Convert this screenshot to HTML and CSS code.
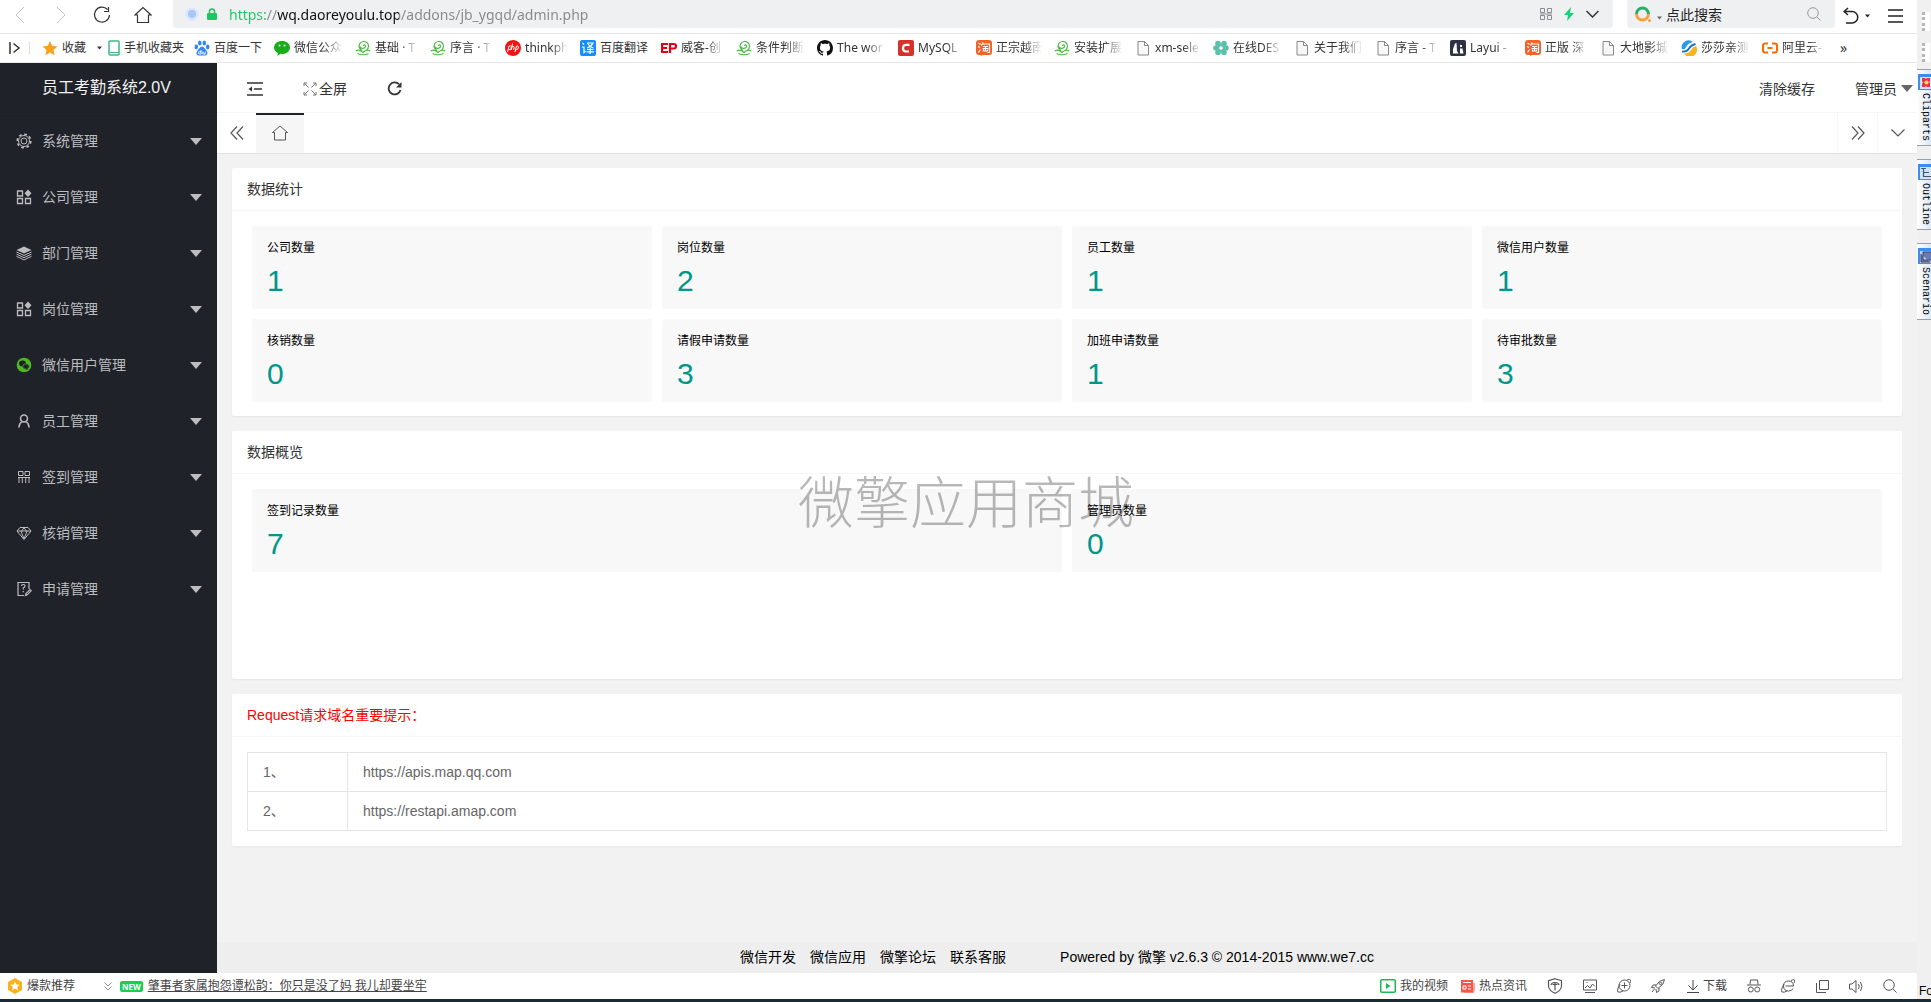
FILE: index.html
```html
<!DOCTYPE html>
<html lang="zh-CN">
<head>
<meta charset="utf-8">
<title>员工考勤系统2.0V</title>
<link rel="stylesheet" href="styles.css">
</head>
<body>
<svg class="sprite" aria-hidden="true">
  <symbol id="caret" viewBox="0 0 12 7"><path d="M0 0h12L6 7z" fill="currentColor"/></symbol>
  <symbol id="page" viewBox="0 0 16 16"><path d="M3 1.500h6.500l4 4v9.500h-10.500zM9.500 1.500v4h4" fill="#f7f7f7" stroke="#888"/></symbol>
  <symbol id="tp" viewBox="0 0 16 16"><g fill="none" stroke="#4fb848" stroke-width="1.200"><path d="M7 10.500a4.700 4.700 0 1 1 4.500-.5M4.800 6.500c1 2.500 4.500 2.500 5.500.5s-1.500-3-2-1M.8 11c2-1.500 4.500-1 7.200 1.500 2.500-2.500 5-3 7.200-1.500M2.500 13.500q5.500 2.500 11 0"/></g></symbol>
  <symbol id="tao" viewBox="0 0 16 16"><path d="M3 0h10a3 3 0 0 1 3 3v9a3 3 0 0 1-3 3H7l-2 1v-1H3a3 3 0 0 1-3-3V3a3 3 0 0 1 3-3z" fill="#f4622a"/><path d="M2.500 3l2 1.500M2 6.500l2 1M2.500 12.500l2-3M7 2.500L5.500 5.500M6.500 4h7v8.500h-2M7 6.500h5M6.500 8.500h6M9.500 6.500v4.500M7.500 9.500V11h4V9.500" fill="none" stroke="#fff" stroke-width="1.200"/></symbol>
  <symbol id="grid" viewBox="0 0 16 16"><path d="M1.500 2h5v5h-5zM1.500 9.500h5v5h-5zM9.500 9.500h5v5h-5z" fill="none" stroke="currentColor" stroke-width="1.300"/><path d="M12 .5L15.500 4.200 12 8 8.500 4.200z" fill="currentColor"/></symbol>
</svg>

<div class="desktop">
  <div class="browser">
    <header class="toolbar">
      <div class="history">
        <button type="button" aria-label="后退" class="dim"><svg width="12" height="18" viewBox="0 0 12 18"><path d="M10 1L2 9l8 8" class="ln"/></svg></button>
        <button type="button" aria-label="前进" class="dim"><svg width="12" height="18" viewBox="0 0 12 18"><path d="M2 1l8 8-8 8" class="ln"/></svg></button>
        <button type="button" aria-label="刷新"><svg width="18" height="18" viewBox="0 0 18 18"><path d="M14.500 3.500A7.500 7.500 0 1 0 16.500 9M15.500 1v4.500H11" class="ln w1"/></svg></button>
        <button type="button" aria-label="主页"><svg width="18" height="18" viewBox="0 0 18 18"><path d="M1 9l8-7.500L17 9h-2.500v7.500h-11V9z" class="ln w1"/></svg></button>
      </div>
      <div class="address">
        <svg width="14" height="14" viewBox="0 0 14 14"><circle cx="7" cy="7" r="6.500" fill="#d9e6fb"/><circle cx="7" cy="7" r="4" fill="#a9c6f7"/></svg>
        <svg class="lock" width="10" height="13" viewBox="0 0 10 13"><rect y="5" width="10" height="7" rx="1" fill="#17c964"/><path d="M2.500 6V3.500a2.500 2.500 0 0 1 5 0V6" fill="none" stroke="#17c964" stroke-width="1.600"/></svg>
        <input class="url" type="text" aria-label="地址" value="https://wq.daoreyoulu.top/addons/jb_ygqd/admin.php">
        <svg width="12" height="12" viewBox="0 0 12 12"><path d="M.5.5h4v4h-4zM7.500.5h4v4h-4zM.5 7.500h4v4h-4zM7.500 7.500h4v4h-4zM0 6h12" fill="none" stroke="#8a8c8f"/></svg>
        <svg width="10" height="14" viewBox="0 0 10 14"><path d="M7 0L0 8h4l-1 6 7-8H6z" fill="#17d27c"/></svg>
        <svg width="13" height="8" viewBox="0 0 13 8"><path d="M.5 1l6 6 6-6" class="ln w2"/></svg>
      </div>
      <div class="search">
        <svg width="16" height="16" viewBox="0 0 16 16"><path d="M1.500 8a6 6 0 0 1 12 0" fill="none" stroke="#1bb46c" stroke-width="3"/><path d="M1.500 8a6 6 0 0 0 12 0" fill="none" stroke="#f9a03a" stroke-width="3"/><circle cx="14.500" cy="14.500" r="1.500" fill="#f9a03a"/></svg>
        <svg class="mini" width="5" height="4"><use href="#caret"/></svg>
        <input type="text" aria-label="搜索" value="点此搜索">
        <svg width="14" height="14" viewBox="0 0 14 14"><circle cx="6" cy="6" r="5.300" fill="none" stroke="#999"/><path d="M10 10l3.500 3.500" stroke="#999"/></svg>
      </div>
      <div class="menu">
        <button type="button" aria-label="撤销"><svg width="16" height="17" viewBox="0 0 16 17"><path d="M5 1L1 4.500 5 8M1 4.500h8a5.500 5.500 0 0 1 0 11.500H3" class="ln w2"/></svg></button>
        <svg width="5" height="4"><use href="#caret"/></svg>
        <button type="button" aria-label="菜单" class="burger"><svg width="15" height="14" viewBox="0 0 15 14"><path d="M0 1h15M0 7h15M0 13h15" class="ln w2"/></svg></button>
      </div>
    </header>

    <nav class="bookmarks" aria-label="收藏栏">
      <button type="button" aria-label="侧栏" class="rail"><svg width="12" height="12" viewBox="0 0 12 12"><path d="M1 0v12M4.500 1.500L10 6l-5.500 4.500" class="ln w2"/></svg></button>
      <a href="#" class="fav"><svg width="16" height="16" viewBox="0 0 16 16"><path d="M8 1l2.200 4.800 5.300.6-4 3.600 1.100 5.200L8 12.600l-4.600 2.600L4.500 10l-4-3.600 5.300-.6z" fill="#f9a11b"/></svg>收藏<svg class="drop" width="5" height="4"><use href="#caret"/></svg></a>
      <a href="#" class="phone"><svg width="12" height="16" viewBox="0 0 12 16"><rect x="1" y="1" width="10" height="14" rx="1" fill="#fff" stroke="#42b883" stroke-width="1.500"/><path d="M1 12.500h10" stroke="#42b883"/></svg>手机收藏夹</a>
      <a href="#" class="baidu"><svg width="16" height="16" viewBox="0 0 16 16" fill="#3388f0"><ellipse cx="2.300" cy="7" rx="1.800" ry="2.400"/><ellipse cx="5.800" cy="3" rx="1.800" ry="2.600"/><ellipse cx="10.300" cy="3" rx="1.800" ry="2.600"/><ellipse cx="13.700" cy="7" rx="1.800" ry="2.400"/><path d="M8 6.500c2 0 3 2.500 4.500 4 2 2.500.5 5-1.500 5-1.500 0-4.500-.2-6 0-2.500 0-3.500-2.500-1.500-5C5 9 6 6.500 8 6.500z"/><path d="M7 10v4H5.500a1 1 0 0 1 0-2.300H7M8.800 11.500V14h2.400v-2.500" fill="none" stroke="#fff"/></svg>百度一下</a>
      <a href="#"><svg width="16" height="16" viewBox="0 0 16 16"><path d="M8 1c4.500 0 8 2.700 8 6.500S12.500 14 8 14l-1.500-.2L3.500 16l.3-3C1.500 12 0 10 0 7.500 0 3.700 3.500 1 8 1z" fill="#1aad19"/><circle cx="5.500" cy="5.500" r="1" fill="#fff"/><circle cx="10.500" cy="5.500" r="1" fill="#fff"/></svg><span class="l">微信公众</span></a>
      <a href="#"><svg width="16" height="16"><use href="#tp"/></svg><span class="s">基础 · T</span></a>
      <a href="#"><svg width="16" height="16"><use href="#tp"/></svg><span class="s">序言 · T</span></a>
      <a href="#"><svg width="16" height="16" viewBox="0 0 16 16"><circle cx="8" cy="8" r="8" fill="#f01414"/><path d="M2.500 12L4 6h1.500q1.200 0 .8 2t-2.500 1.800M7.500 3.500L6.300 10M7 7q2.500-1.500 2.200.5L8.700 10M10 12l1.500-6h1q1.200 0 .8 2t-2.500 1.800" fill="none" stroke="#fff"/></svg><span class="s">thinkph</span></a>
      <a href="#"><svg width="16" height="16" viewBox="0 0 16 16"><rect width="16" height="16" rx="2" fill="#1a8cff"/><path d="M2.500 3l1.500 1.500M2 7h2v5.500l1.500-1.500M7 3h6q-2 4-6 5M7.500 3.500q2 3.500 6 4.500M7 9.500h6.500M6.500 11.800h7.500M10.200 8v6" fill="none" stroke="#fff" stroke-width="1.200"/></svg><span class="l whole">百度翻译</span></a>
      <a href="#"><svg width="16" height="16" viewBox="0 0 16 16"><path d="M7 4H1v8h6M1 8h5M9 13V4h4q2 0 2 2.200T13 8.500H9" fill="none" stroke="#e60012" stroke-width="2.200"/></svg><span class="s">威客-创</span></a>
      <a href="#"><svg width="16" height="16"><use href="#tp"/></svg><span class="l">条件判断</span></a>
      <a href="#"><svg width="16" height="16" viewBox="0 0 16 16"><path d="M8 0C3.580 0 0 3.580 0 8c0 3.540 2.290 6.530 5.470 7.590.4.070.55-.17.55-.38v-1.490c-2.010.37-2.530-.49-2.690-.94-.09-.23-.48-.94-.82-1.130-.28-.15-.68-.52-.01-.53.63-.01 1.080.58 1.230.82.72 1.210 1.870.87 2.330.66.070-.52.28-.87.51-1.070-1.780-.2-3.640-.89-3.640-3.950 0-.87.31-1.590.82-2.150-.08-.2-.36-1.020.08-2.120 0 0 .67-.21 2.200.82.640-.18 1.320-.27 2-.27s1.360.09 2 .27c1.530-1.040 2.200-.82 2.200-.82.44 1.100.16 1.920.08 2.120.51.56.82 1.270.82 2.150 0 3.070-1.870 3.750-3.650 3.950.29.25.54.73.54 1.480v2.200c0 .21.15.46.55.38A8 8 0 0 0 16 8c0-4.420-3.580-8-8-8z" fill="#111"/></svg><span class="l">The wor</span></a>
      <a href="#"><svg width="16" height="16" viewBox="0 0 16 16"><rect width="16" height="16" rx="2" fill="#d6312b"/><path d="M11.500 4.800H8Q5.200 4.800 5 8t3 3.500h3" fill="none" stroke="#fff" stroke-width="2.200"/></svg><span class="m">MySQL</span></a>
      <a href="#"><svg width="16" height="16"><use href="#tao"/></svg><span class="m">正宗越南</span></a>
      <a href="#"><svg width="16" height="16"><use href="#tp"/></svg><span class="l">安装扩展</span></a>
      <a href="#"><svg width="16" height="16"><use href="#page"/></svg><span class="m">xm-sele</span></a>
      <a href="#"><svg width="16" height="16" viewBox="0 0 16 16" fill="#5cc0aa"><circle cx="5" cy="3.500" r="2.800"/><circle cx="11" cy="3.500" r="2.800"/><circle cx="3" cy="8" r="2.800"/><circle cx="13" cy="8" r="2.800"/><circle cx="5" cy="12.500" r="2.800"/><circle cx="11" cy="12.500" r="2.800"/><path d="M5 4h6v8H5z"/><circle cx="8" cy="8" r="1.800" fill="#fff"/></svg><span class="l">在线DES</span></a>
      <a href="#"><svg width="16" height="16"><use href="#page"/></svg><span class="l">关于我们</span></a>
      <a href="#"><svg width="16" height="16"><use href="#page"/></svg><span class="s">序言 - T</span></a>
      <a href="#"><svg width="16" height="16" viewBox="0 0 16 16"><rect width="16" height="16" rx="2" fill="#2f3243"/><path d="M3 13.500V9l2-5.500 1.500-.5L7 11l1.500 2.500zM10 5h2v2h-2zM10 8.500h2.500l1 5H10z" fill="#fff"/></svg><span class="s">Layui -</span></a>
      <a href="#"><svg width="16" height="16"><use href="#tao"/></svg><span class="s">正版 深</span></a>
      <a href="#"><svg width="16" height="16"><use href="#page"/></svg><span class="l">大地影城</span></a>
      <a href="#"><svg width="16" height="16" viewBox="0 0 16 16"><path d="M.8 9A7 7 0 0 1 12 2q-5 1-6.500 4.500T.8 9z" fill="#2b9ae6"/><path d="M15 6a7 7 0 0 1-12 7.500q5 0 7-3.500t5-4z" fill="#f7b51d"/><path d="M1 11.500q5 .5 7-3t6.500-4.500" fill="none" stroke="#1673c4" stroke-width="1.800"/></svg><span class="l">莎莎亲测</span></a>
      <a href="#"><svg width="16" height="16" viewBox="0 0 16 16"><path d="M6 3.500H3Q1 3.500 1 5.500v5q0 2 2 2h3M10 3.500h3q2 0 2 2v5q0 2-2 2h-3M5.500 8h5" fill="none" stroke="#ff6a00" stroke-width="2"/></svg><span class="s">阿里云-</span></a>
      <button type="button" class="more" aria-label="更多">»</button>
    </nav>

    <div class="app">
      <aside class="side">
        <h1>员工考勤系统2.0V</h1>
        <ul>
          <li><button type="button"><svg width="16" height="16" viewBox="0 0 16 16"><g fill="none" stroke="currentColor"><circle cx="8" cy="8" r="3"/><circle cx="8" cy="8" r="5.500"/><circle cx="8" cy="8" r="6.800" stroke-width="1.600" stroke-dasharray="2.700 2.640"/></g></svg><span>系统管理</span><svg class="ar" width="12" height="7"><use href="#caret"/></svg></button></li>
          <li><button type="button"><svg width="16" height="16"><use href="#grid"/></svg><span>公司管理</span><svg class="ar" width="12" height="7"><use href="#caret"/></svg></button></li>
          <li><button type="button"><svg width="16" height="16" viewBox="0 0 16 16"><path d="M8 1.500L15.500 5 8 8.500.5 5z" fill="currentColor"/><path d="M.5 7L8 10.500 15.500 7M.5 9.200L8 12.700l7.500-3.500M.5 11.400L8 14.900l7.500-3.500" fill="none" stroke="currentColor"/></svg><span>部门管理</span><svg class="ar" width="12" height="7"><use href="#caret"/></svg></button></li>
          <li><button type="button"><svg width="16" height="16"><use href="#grid"/></svg><span>岗位管理</span><svg class="ar" width="12" height="7"><use href="#caret"/></svg></button></li>
          <li><button type="button"><svg width="16" height="16" viewBox="0 0 16 16"><circle cx="8" cy="8" r="7.300" fill="#4fb81f"/><ellipse cx="6.500" cy="6.500" rx="3.500" ry="2.900" fill="#20222a"/><ellipse cx="10" cy="9.500" rx="3.300" ry="2.700" fill="#20222a" stroke="#4fb81f" stroke-width=".7"/><path d="M11 11l1.200 1.800L9 12z" fill="#20222a"/></svg><span>微信用户管理</span><svg class="ar" width="12" height="7"><use href="#caret"/></svg></button></li>
          <li><button type="button"><svg width="16" height="16" viewBox="0 0 16 16"><path d="M8 2a3.500 3.500 0 1 1 0 7 3.500 3.500 0 0 1 0-7zM3 14.500q0-4 3-6M13 14.500q0-4-3-6" fill="none" stroke="currentColor" stroke-width="1.500"/></svg><span>员工管理</span><svg class="ar" width="12" height="7"><use href="#caret"/></svg></button></li>
          <li><button type="button"><svg width="16" height="16" viewBox="0 0 16 16"><path d="M2.500 2.500h4.500v4H2.500zM9 2.500h4.500v4H9zM2 8.500h12M3 9v5M6.300 9v5M9.700 9v5M13 9v5" fill="none" stroke="currentColor"/></svg><span>签到管理</span><svg class="ar" width="12" height="7"><use href="#caret"/></svg></button></li>
          <li><button type="button"><svg width="16" height="16" viewBox="0 0 16 16"><path d="M4 2.500h8L15 6l-7 8.500L1 6zM1 6h14M5 6l3 8M11 6l-3 8M5.500 6L8 3l2.500 3" fill="none" stroke="currentColor"/></svg><span>核销管理</span><svg class="ar" width="12" height="7"><use href="#caret"/></svg></button></li>
          <li><button type="button"><svg width="16" height="16" viewBox="0 0 16 16"><path d="M13 8V1.500H2v13h6M5.500 5q0-1.500 1.800-1.500T9 5q0 1-1.700 2v1.500M7.300 10v1.200M9.500 14.500l.5-2 4-4 1.200 1.300-4 4z" fill="none" stroke="currentColor" stroke-width="1.200"/></svg><span>申请管理</span><svg class="ar" width="12" height="7"><use href="#caret"/></svg></button></li>
        </ul>
      </aside>

      <div class="main">
        <div class="topbar">
          <button type="button" aria-label="收起菜单"><svg width="16" height="14" viewBox="0 0 16 14"><path d="M0 1h16M7 7h8M0 13h16" stroke="currentColor" stroke-width="1.600"/><path d="M5 4.500v5L1.500 7z" fill="currentColor"/></svg></button>
          <button type="button" class="full"><svg width="14" height="14" viewBox="0 0 14 14"><path d="M1 4V1h3M1 1l4.500 4.500M10 1h3v3M13 1L8.500 5.500M1 10v3h3M1 13l4.500-4.500M10 13h3v-3M13 13L8.500 8.500" fill="none" stroke="#777"/></svg>全屏</button>
          <button type="button" aria-label="刷新页面"><svg width="15" height="15" viewBox="0 0 15 15"><path d="M12 3.200A6 6 0 1 0 13.500 9" fill="none" stroke="currentColor" stroke-width="1.800"/><path d="M14.500 1v5.500H9z" fill="currentColor"/></svg></button>
          <button type="button" class="clear">清除缓存</button>
          <button type="button" class="user">管理员<svg width="12" height="7"><use href="#caret"/></svg></button>
        </div>
        <div class="tabs">
          <button type="button" aria-label="向左" class="prev"><svg width="14" height="14" viewBox="0 0 14 14"><path d="M7 .5L1 7l6 6.500M13 .5L7 7l6 6.500" class="ln w1"/></svg></button>
          <button type="button" aria-label="首页" class="home"><svg width="16" height="16" viewBox="0 0 16 16"><path d="M.5 7.500L8 1l7.500 6.500h-2V15h-11V7.500z" class="ln"/></svg></button>
          <button type="button" aria-label="向右" class="next"><svg width="14" height="14" viewBox="0 0 14 14"><path d="M1 .5L7 7l-6 6.500M7 .5L13 7l-6 6.500" class="ln w1"/></svg></button>
          <button type="button" aria-label="标签操作" class="next"><svg width="14" height="8" viewBox="0 0 14 8"><path d="M.5.5L7 7 13.500.5" class="ln w1"/></svg></button>
        </div>

        <main class="content">
          <section class="card">
            <h2>数据统计</h2>
            <div class="stats four">
              <a href="#"><h3>公司数量</h3><p>1</p></a>
              <a href="#"><h3>岗位数量</h3><p>2</p></a>
              <a href="#"><h3>员工数量</h3><p>1</p></a>
              <a href="#"><h3>微信用户数量</h3><p>1</p></a>
              <a href="#"><h3>核销数量</h3><p>0</p></a>
              <a href="#"><h3>请假申请数量</h3><p>3</p></a>
              <a href="#"><h3>加班申请数量</h3><p>1</p></a>
              <a href="#"><h3>待审批数量</h3><p>3</p></a>
            </div>
          </section>
          <section class="card overview">
            <h2>数据概览</h2>
            <div class="watermark">微擎应用商城</div>
            <div class="stats two">
              <a href="#"><h3>签到记录数量</h3><p>7</p></a>
              <a href="#"><h3>管理员数量</h3><p>0</p></a>
            </div>
          </section>
          <section class="card">
            <h2 class="warn">Request请求域名重要提示：</h2>
            <div class="pad">
              <table>
                <tbody>
                  <tr><td class="no">1、</td><td>https://apis.map.qq.com</td></tr>
                  <tr><td class="no">2、</td><td>https://restapi.amap.com</td></tr>
                </tbody>
              </table>
            </div>
          </section>
        </main>

        <footer class="foot">
          <a href="#">微信开发</a><a href="#">微信应用</a><a href="#">微擎论坛</a><a href="#">联系客服</a>
          <span>Powered by 微擎 v2.6.3 © 2014-2015 www.we7.cc</span>
        </footer>
      </div>
    </div>

    <div class="status">
      <svg width="16" height="16" viewBox="0 0 16 16"><path d="M8 0l7 4v8l-7 4-7-4V4z" fill="#fbb01e"/><path d="M8 3.500l1.400 3 3.200.3-2.400 2.200.7 3.200L8 10.600l-2.900 1.600.7-3.200-2.400-2.200 3.200-.3z" fill="#fff"/></svg>
      <a href="#" class="hot">爆款推荐</a>
      <svg width="8" height="9" viewBox="0 0 8 9"><path d="M.5.5L4 4 7.500.5M.5 4.500L4 8l3.500-3.500" fill="none" stroke="#888"/></svg>
      <span class="new">NEW</span>
      <a href="#" class="news">肇事者家属抱怨谭松韵：你只是没了妈 我儿却要坐牢</a>
      <div class="tools">
        <button type="button" class="txt"><svg width="16" height="14" viewBox="0 0 16 14"><rect x=".75" y=".75" width="14.500" height="12.500" rx="1" fill="none" stroke="#1db954" stroke-width="1.500"/><path d="M6 4v6l4.500-3z" fill="#1db954"/></svg>我的视频</button>
        <button type="button" class="txt"><svg width="14" height="14" viewBox="0 0 14 14"><path d="M10 4h4v8l-2 2H3z" fill="#ffa29b"/><path d="M0 1h12v11a1.500 1.500 0 0 0 1 1.500H0z" fill="#f9564a"/><path d="M2 3.500h8M2 7h3v3H2zM7 7h3M7 10h3" fill="none" stroke="#fff"/></svg>热点资讯</button>
        <button type="button" aria-label="防护"><svg width="16" height="16" viewBox="0 0 16 16"><path d="M8 .7l6.500 2v5.500Q14 12.500 8 15.300 2 12.500 1.500 8.200V2.700z" class="ln w1"/><path d="M4 7q.5-2.500 4-2.500T12 7M8 5v7.500M5.500 6.500h5" class="ln w1"/></svg></button>
        <button type="button" aria-label="截图"><svg width="14" height="14" viewBox="0 0 14 14"><path d="M.5 1h13v10H.5zM2 9l2.500-2.500L7 9l2.500-4L12 7.500M2 13.500h10M3.500 3.500h1" class="ln"/></svg></button>
        <button type="button" aria-label="加速"><svg width="14" height="14" viewBox="0 0 14 14"><circle cx="7.500" cy="6.500" r="5.500" class="ln"/><path d="M7.500 3.500v6M4.500 6.500h6M3 5q-3.500 6-2 8 2 .8 5-1M10 1q3-1.200 3.500 0t-.5 3" class="ln"/></svg></button>
        <button type="button" aria-label="火箭"><svg width="14" height="14" viewBox="0 0 14 14"><path d="M13.500.5Q8 1 4.500 7l2.500 2.500Q13 6 13.500.5zM5 6H2L.5 8.500 4 9M8 9v3l-2.500 1.500L5 10M3.500 10L1 13" class="ln"/><circle cx="9.500" cy="4.500" r="1.200" class="ln"/></svg></button>
        <button type="button" class="txt dl"><svg width="12" height="13" viewBox="0 0 12 13"><path d="M6 0v9.500M1.500 5.500L6 10l4.500-4.500M0 12.500h12" class="ln"/></svg>下载</button>
        <button type="button" aria-label="无痕"><svg width="14" height="14" viewBox="0 0 14 14"><path d="M3 5.500l.5-4.500h7l.5 4.500M0 6h14" class="ln"/><circle cx="3.800" cy="10.500" r="2.500" class="ln"/><circle cx="10.200" cy="10.500" r="2.500" class="ln"/></svg></button>
        <button type="button" aria-label="兼容模式"><svg width="14" height="14" viewBox="0 0 14 14"><path d="M4.500 7h8q-.2-5-5-5t-5 5q.2 5 5 5 3.500 0 4.500-2.500M3 5q-3.500 6-2 8 2 .8 5-1M10 1.500q3-1.500 3.500-.5t-.5 3" class="ln"/></svg></button>
        <button type="button" aria-label="小窗"><svg width="13" height="13" viewBox="0 0 13 13"><path d="M3.500.5h9v9h-9zM.5 3v9.500H10" class="ln"/></svg></button>
        <button type="button" aria-label="声音"><svg width="14" height="13" viewBox="0 0 14 13"><path d="M.5 4H3l4-3.500v12L3 9H.5zM9.500 4q1.500 2.500 0 5M11.500 2q3 4.500 0 9" class="ln"/></svg></button>
        <button type="button" aria-label="缩放"><svg width="14" height="14" viewBox="0 0 14 14"><circle cx="6" cy="6" r="5.300" class="ln"/><path d="M10 10l3.500 3.500" class="ln"/></svg></button>
      </div>
    </div>
  </div>

  <aside class="dock">
    <div class="grip"></div>
    <div class="grip"></div>
    <button type="button" class="clip"><svg width="14" height="16" viewBox="0 0 14 16"><path d="M0 0h14v16H0z" fill="#3d8cf0"/><path d="M2 3h12v12H2z" fill="#cfe2fb"/><path d="M4 4h3l1 1 1-1h3v3l-1 1 1 1v4h-3l-1-1-1 1H4v-3l1-1.500L4 7z" fill="#f0304a"/><circle cx="8.500" cy="8.500" r="2" fill="#ffe25a"/></svg><span>Cliparts</span></button>
    <button type="button"><svg width="14" height="16" viewBox="0 0 14 16"><path d="M0 0h14v16H0z" fill="#3d8cf0"/><path d="M2 3h12v12H2z" fill="#cfe2fb"/><path d="M3 4.500h5M5.500 5v7.500H14M5.500 8.500H11" fill="none" stroke="#456" stroke-width="1.200"/></svg><span>Outline</span></button>
    <button type="button"><svg width="14" height="16" viewBox="0 0 14 16"><path d="M0 0h14v16H0z" fill="#3d8cf0"/><path d="M2 3h12v12H2z" fill="#b9cdea"/><path d="M5 4h9v8H5zM3 6v8h9" fill="#6d78b8" stroke="#445"/></svg><span>Scenario</span></button>
    <span class="fo">Fo</span>
  </aside>
</div>
<div class="taskbar"></div>
</body>
</html>
```
FILE: styles.css
```css
* { box-sizing: border-box; }
body {
  margin: 0;
  min-height: 100vh;
  display: flex;
  flex-direction: column;
  font: 14px/20px "Liberation Sans", "Noto Sans CJK SC", sans-serif;
  color: #333;
  background: #f2f2f2;
}
h1, h2, h3, p, ul { margin: 0; padding: 0; font-weight: 400; list-style: none; }
a { color: inherit; text-decoration: none; }
button, input {
  font: inherit;
  color: inherit;
  background: none;
  border: 0;
  padding: 0;
  outline: 0;
}
button { display: flex; align-items: center; justify-content: center; white-space: nowrap; }
svg { flex: none; display: block; }
.sprite { position: absolute; width: 0; height: 0; }
.ln { fill: none; stroke: currentColor; }
.w1 { stroke-width: 1.2; }
.w2 { stroke-width: 1.5; }

.desktop { flex: 1; display: flex; }
.browser { flex: 1; min-width: 0; display: flex; flex-direction: column; }
.toolbar, .bookmarks, .status { font-family: "Noto Sans", "Noto Sans CJK SC", sans-serif; }

/* Address row */
.toolbar {
  display: flex;
  height: 34px;
  background: #fff;
  border-bottom: 1px solid #e8e8e8;
}
.history { display: flex; gap: 23px; width: 173px; padding-left: 11px; }
.history button { width: 18px; height: 30px; }
.history .dim { color: #c4c4c4; }
.address, .search {
  display: flex;
  align-items: center;
  height: 28px;
  background: #eff0f2;
  border-radius: 0 0 4px 4px;
}
.address { flex: 1; padding: 0 14px 0 12px; gap: 12px; }
.lock { margin-left: -4px; }
.url {
  flex: 1;
  height: 28px;
  font-size: 14px;
  color: transparent;
  background: linear-gradient(90deg, #17c964 38px, #888 38px, #888 48px, #111 48px, #111 170px, #888 170px);
  -webkit-background-clip: text;
  background-clip: text;
}
.search { width: 208px; margin-left: 14px; padding: 0 14px 0 8px; font-size: 14px; color: #222; }
.search input { flex: 1; min-width: 0; height: 24px; margin-left: 4px; }
.mini { margin: 8px 0 0 6px; color: #666; }
.menu { display: flex; align-items: center; width: 82px; padding-left: 8px; gap: 6px; color: #222; height: 31px; }
.burger { margin-left: 12px; }

/* Bookmark row */
.bookmarks {
  display: flex;
  align-items: center;
  gap: 12px;
  height: 29px;
  background: #fff;
  border-bottom: 1px solid #e8e8e8;
  font-size: 12px;
  overflow: hidden;
}
.bookmarks a { display: flex; align-items: center; gap: 4px; white-space: nowrap; }
.bookmarks span { overflow: hidden; -webkit-mask: linear-gradient(90deg, #000 60%, transparent); mask: linear-gradient(90deg, #000 60%, transparent); }
.bookmarks .whole { -webkit-mask: none; mask: none; }
.s { width: 43px; }
.m { width: 46px; }
.l { width: 49px; }
.bookmarks .rail { width: 21px; margin-left: 9px; justify-content: flex-start; border-right: 1px solid #ddd; }
.drop { margin-left: 7px; }
.bookmarks .fav { margin-right: -6px; }
.bookmarks .phone { margin-right: -2px; }
.more { font-size: 14px; margin-left: 3px; }

/* Application */
.app { flex: 1; display: flex; }
.side { width: 217px; background: #20222a; color: #bcbdbf; }
.side h1 { height: 50px; padding-left: 42px; font-size: 16px; line-height: 49px; color: #f2f2f2; border-bottom: 1px solid #1c1e25; }
.side button { width: 100%; height: 56px; padding: 0 15px 0 16px; }
.side span { flex: 1; margin-left: 10px; text-align: left; }
.main { flex: 1; min-width: 0; display: flex; flex-direction: column; background: #f2f2f2; }
.topbar {
  display: flex;
  align-items: center;
  gap: 40px;
  height: 50px;
  padding: 2px 4px 0 30px;
  background: #fff;
  border-bottom: 1px solid #f6f6f6;
}
.full { gap: 2px; }
.clear { margin-left: auto; }
.user { gap: 4px; }
.user svg { color: #666; }
.tabs { display: flex; height: 41px; background: #fff; border-bottom: 1px solid #e2e2e2; color: #555; }
.prev { width: 39px; }
.home { width: 48px; padding-bottom: 2px; background: #f6f6f6; border-top: 2px solid #20222a; }
.next { width: 40px; border-left: 1px solid #f6f6f6; }
.home + .next { margin-left: auto; }

.content { flex: 1; display: flex; flex-direction: column; gap: 15px; padding: 14px 15px; }
.card { background: #fff; border-radius: 2px; box-shadow: 0 1px 2px rgba(0, 0, 0, .05); }
.card h2 { padding: 0 15px; font-size: 14px; line-height: 42px; border-bottom: 1px solid #f6f6f6; }
.card .warn { color: #f00; }
.stats { display: grid; gap: 10px; padding: 15px 20px 14px; }
.four { grid-template-columns: repeat(4, 1fr); }
.two { grid-template-columns: repeat(2, 1fr); }
.stats a { padding: 12px 15px 10px; background: #f8f8f8; border-radius: 2px; color: #000; }
.stats h3 { font-size: 12px; line-height: 20px; }
.stats p { margin-top: 5px; font-size: 30px; line-height: 36px; color: #009688; }
.overview { position: relative; min-height: 248px; }
.watermark {
  position: absolute;
  top: 40px;
  left: 0;
  right: 0;
  padding-right: 202px;
  text-align: center;
  font: 300 56px/56px "Noto Sans CJK SC", sans-serif;
  color: rgba(0, 0, 0, .28);
  pointer-events: none;
}
.pad { padding: 15px; }
table { width: 100%; border-collapse: collapse; color: #666; }
td { height: 39px; padding: 0 15px; border: 1px solid #e6e6e6; }
.no { width: 100px; }

.foot { display: flex; justify-content: center; gap: 14px; padding: 5px 20px 6px 0; background: #eee; color: #000; }
.foot span { margin-left: 40px; }

/* Browser status bar */
.status { display: flex; align-items: center; height: 26px; padding: 0 20px 0 7px; background: #fff; font-size: 12px; color: #444; }
.hot { margin: 0 29px 0 4px; }
.new { margin: 0 5px 0 8px; padding: 0 2px; font: bold 8px/11px "Open Sans", sans-serif; color: #fff; background: #12d155; border-radius: 2px; }
.news { text-decoration: underline; }
.tools { display: flex; align-items: center; gap: 20px; margin-left: auto; color: #555; }
.tools button { min-width: 14px; }
.tools .txt { gap: 4px; color: #444; }
.tools .txt + .txt { margin-left: -7px; }
.tools .dl { margin-left: 2px; }

/* Docked tool tabs at the window edge */
.dock { width: 14px; overflow: hidden; background: #f0f0f0; display: flex; flex-direction: column; align-items: stretch; }
.grip { width: 8px; height: 19px; margin: 12px 0 0 5px; border-left: 3px dotted #b5b5b5; background: #fff; }
.dock button {
  flex-direction: column;
  justify-content: flex-start;
  gap: 3px;
  padding: 4px 0 4px 2px;
  margin-bottom: 13px;
  border: solid #9a9fa5;
  border-width: 1px 0;
  background: linear-gradient(90deg, #fff, #dbe8f4);
  color: #000;
  font: 10px/12px "Liberation Mono", monospace;
}
.dock .clip { margin-top: 7px; }
.dock button span { writing-mode: vertical-rl; }
.fo { margin: auto 0 0 2px; font-size: 12px; line-height: 16px; color: #000; }
.taskbar { height: 3px; background: #1b2b33; }
```
